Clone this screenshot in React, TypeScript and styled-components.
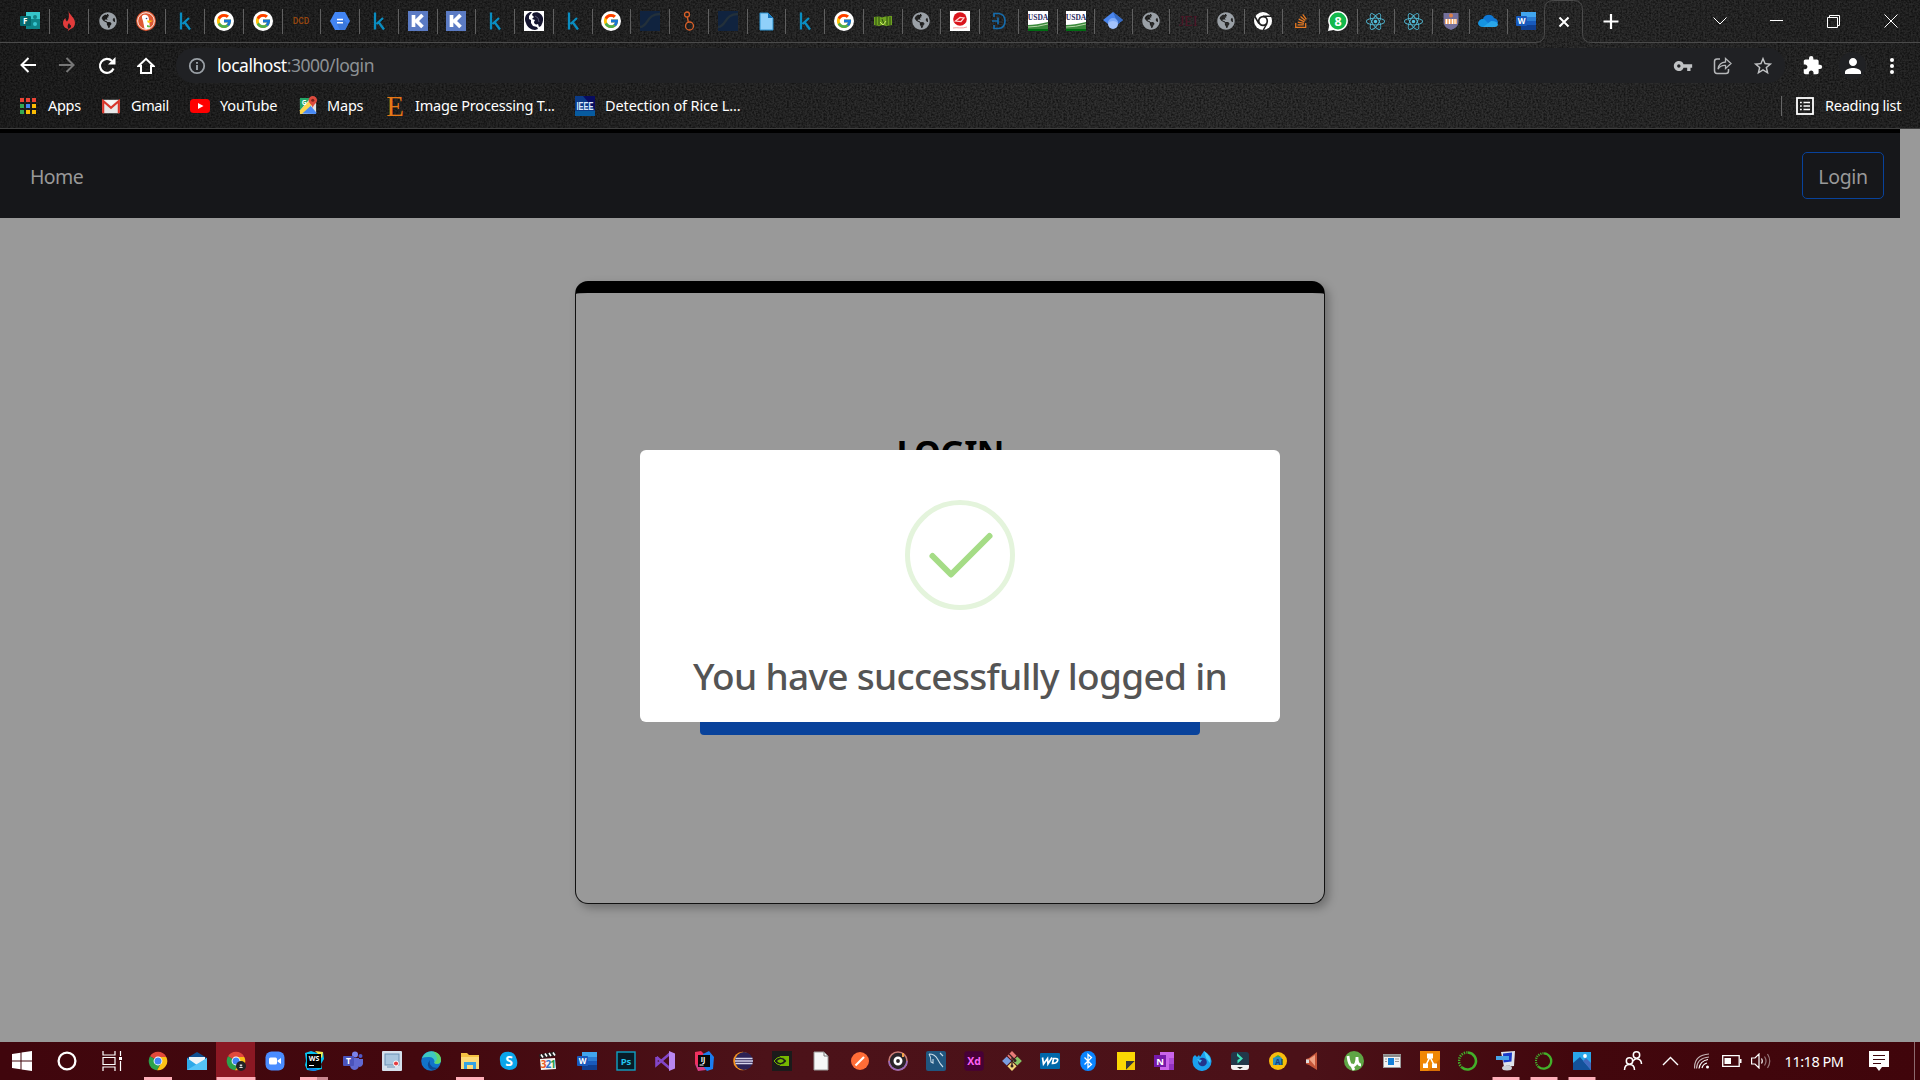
import React from "react";
import styled, { createGlobalStyle, css } from "styled-components";
import { FcGoogle } from "react-icons/fc";
import { FaGlobeAmericas, FaReact, FaStackOverflow } from "react-icons/fa";
import { MdVpnKey, MdExtension, MdPerson, MdStarBorder } from "react-icons/md";

const Global = createGlobalStyle`
  * { box-sizing: border-box; }
  body { margin: 0; background: #999; overflow: hidden; font-family: "Noto Sans", "Open Sans", sans-serif; }
  svg { display: block; }
`;

const Screen = styled.div`
  width: 1920px;
  height: 1080px;
  display: flex;
  flex-direction: column;
`;

/* ---------- browser chrome ---------- */
const weave = `url("data:image/svg+xml,%3Csvg xmlns='http://www.w3.org/2000/svg' width='240' height='129'%3E%3Cfilter id='n'%3E%3CfeTurbulence type='fractalNoise' baseFrequency='.55' numOctaves='2' stitchTiles='stitch'/%3E%3CfeColorMatrix values='0 0 0 0 0  0 0 0 0 0  0 0 0 0 0  0 0 1.6 0 -.5'/%3E%3C/filter%3E%3Crect width='240' height='129' filter='url(%23n)' opacity='.75'/%3E%3C/svg%3E")`;
const Chrome = styled.header`
  height: 129px;
  flex: none;
  border-bottom: 1px solid #3f3f3f;
  background:
    ${weave},
    linear-gradient(90deg, #222222 0%, #2a2a2a 35%, #323232 62%, #303030 80%, #282828 100%);
`;
const TabStrip = styled.div`
  height: 43px;
  display: flex;
`;
const Tab = styled.div<{ $w: number }>`
  width: ${(p) => p.$w}px;
  flex: none;
  display: flex;
  align-items: center;
  justify-content: center;
  border-bottom: 1px solid #4b4b4b;
  position: relative;
  padding-right: 1px;
`;
const LastTab = styled(Tab)`
  justify-content: flex-end;
  padding-right: 0;
`;
const TabLead = styled.div`
  width: 11.25px;
  border-bottom: 1px solid #4b4b4b;
`;
const TabDivider = styled.i`
  position: absolute;
  right: 0;
  top: 9px;
  width: 1px;
  height: 25px;
  background: #606060;
`;
const CurrentTab = styled.div`
  width: 38px;
  flex: none;
  position: relative;
  display: flex;
  align-items: center;
  justify-content: center;
`;
const TabOutline = styled.svg`
  position: absolute;
  left: -10px;
  top: 0;
`;
const TabCorner = styled.div<{ $w: number }>`
  width: ${(p) => p.$w}px;
  flex: none;
`;
const StripRest = styled.div`
  flex: 1;
  display: flex;
  align-items: center;
  border-bottom: 1px solid #4b4b4b;
`;
const Caption = styled.div`
  margin-left: auto;
  height: 38px;
  display: flex;
  align-items: center;
`;
const CaptionButton = styled.span<{ $w: number }>`
  width: ${(p) => p.$w}px;
  display: flex;
  justify-content: center;
`;
const Toolbar = styled.div`
  height: 45px;
  display: flex;
  align-items: center;
  padding: 0 0 0 17px;
`;
const ToolButton = styled.span<{ $w?: number }>`
  width: ${(p) => p.$w ?? 40}px;
  display: flex;
  justify-content: center;
  color: #fff;
`;
const NavButtons = styled.div`
  display: flex;
  width: 158px;
  margin-left: -9px;
`;
const AddressBar = styled.div`
  width: 1609px;
  height: 35px;
  border-radius: 18px;
  background: #202124;
  display: flex;
  align-items: center;
  padding: 0 2px 0 12px;
  margin-left: 10px;
`;
const Url = styled.span`
  margin-left: 11px;
  font-size: 17.5px;
  line-height: 35px;
  letter-spacing: -0.47px;
  color: #8d9195;
  b { color: #fff; font-weight: 400; }
`;
const AddressTools = styled.div`
  margin-left: auto;
  display: flex;
  align-items: center;
`;
const Avatar = styled.span`
  width: 27px;
  height: 27px;
  border-radius: 50%;
  background: #202124;
  display: flex;
  align-items: center;
  justify-content: center;
`;
const Bookmarks = styled.div`
  height: 35px;
  display: flex;
  align-items: center;
  padding: 0 16px 0 18px;
`;
const Bookmark = styled.div<{ $w: number; $gap: number; $ls?: number }>`
  width: ${(p) => p.$w}px;
  flex: none;
  display: flex;
  align-items: center;
  gap: ${(p) => p.$gap}px;
  color: #fff;
  font-size: 14.5px;
  line-height: 20px;
  white-space: nowrap;
  letter-spacing: ${(p) => p.$ls ?? -0.4}px;
`;
const BookmarkLabel = styled.span`
  padding-bottom: 2px;
`;
const ReadingList = styled.div`
  margin-left: auto;
  display: flex;
  align-items: center;
  width: 123px;
  height: 20px;
  border-left: 1px solid #666;
  padding-left: 14px;
  gap: 11px;
  color: #fff;
  font-size: 14.5px;
  line-height: 20px;
  white-space: nowrap;
  letter-spacing: -0.26px;
`;

/* ---------- page ---------- */
const Viewport = styled.main`
  flex: 1;
  min-height: 0;
  background: #999;
  position: relative;
`;
const NavBar = styled.nav`
  width: 1900px;
  height: 89px;
  background: #16171a;
  border-top: 4px solid #000;
  display: flex;
  align-items: center;
  justify-content: space-between;
  padding: 0 16px 0 30px;
  color: #999;
  font-size: 19.5px;
`;
const HomeLink = styled.a`
  letter-spacing: -0.6px;
  line-height: 28px;
  padding-top: 2px;
`;
const LoginButton = styled.button`
  width: 82px;
  height: 47px;
  margin-top: -1px;
  padding: 3px 0 0;
  background: transparent;
  border: 1px solid #08429b;
  border-radius: 5px;
  color: #999;
  font: inherit;
  letter-spacing: -0.35px;
`;
const LoginCard = styled.section`
  width: 750px;
  height: 623px;
  margin: 63px 0 0 575px;
  border: 1px solid #111;
  border-top: 12px solid #000;
  border-radius: 13px;
  box-shadow: 4px 4px 10px rgba(0, 0, 0, 0.28);
  display: flex;
  flex-direction: column;
  align-items: center;
`;
const LoginHeading = styled.h1`
  margin: 135px 0 0;
  font-size: 34px;
  line-height: 48px;
  font-weight: 700;
  letter-spacing: -0.7px;
  color: #000;
`;
const Submit = styled.div`
  width: 500px;
  height: 48px;
  margin-top: 211px;
  border-radius: 4px;
  background: #08429b;
`;
const Backdrop = styled.div`
  position: absolute;
  inset: 0;
  display: flex;
  justify-content: center;
  align-items: flex-start;
  padding-top: 321px;
`;
const Dialog = styled.div`
  width: 640px;
  height: 272px;
  border-radius: 6px;
  background: #fff;
  display: flex;
  flex-direction: column;
  align-items: center;
  padding-top: 50px;
`;
const DialogTitle = styled.h2`
  margin: 39px 0 0;
  font-size: 37px;
  line-height: 54px;
  font-weight: 500;
  letter-spacing: -0.7px;
  color: #545454;
  white-space: nowrap;
`;

/* ---------- taskbar ---------- */
const Taskbar = styled.footer`
  height: 38px;
  flex: none;
  display: flex;
  background: linear-gradient(90deg, #40060d 0%, #43080e 22%, #4c1219 40%, #4b1118 68%, #42070d 82%, #40050b 100%);
`;
const Slot = styled.div<{ $w: number; $active?: boolean }>`
  width: ${(p) => p.$w}px;
  flex: none;
  display: flex;
  align-items: center;
  justify-content: center;
  position: relative;
  ${(p) => p.$active && css`background: #8b1823;`}
`;
const Running = styled.i<{ $w: string; $split?: boolean }>`
  position: absolute;
  bottom: 0;
  left: 50%;
  transform: translateX(-50%);
  height: 3px;
  width: ${(p) => p.$w};
  background: ${(p) => (p.$split ? "linear-gradient(90deg, #ffb0ba 0 17px, #c98890 17px)" : "#ffb0ba")};
`;
const Clock = styled.div`
  width: 76px;
  text-align: center;
  color: #fff;
  font-size: 14.5px;
  line-height: 38px;
  letter-spacing: -0.5px;
  white-space: nowrap;
`;
const ShowDesktop = styled.div`
  width: 6px;
  margin-left: auto;
  border-left: 1px solid #8d6a6e;
`;

/* ---------- icons ---------- */
const Pic = ({ s = 20, children, vb = "0 0 20 20" }: { s?: number; vb?: string; children: React.ReactNode }) => (
  <svg width={s} height={s} viewBox={vb} fill="none">{children}</svg>
);
const Glyph = ({ x = 10, y, size, fill, weight = 700, family = "Open Sans", children }: any) => (
  <text x={x} y={y} fontSize={size} fill={fill} fontWeight={weight} fontFamily={`"${family}", sans-serif`} letterSpacing="0" textAnchor="middle">{children}</text>
);

const Forms = () => (
  <Pic><path d="M6 1h14v9H6z" fill="#36c5c9" /><path d="M6 8h14v10H6z" fill="#0f8387" /><circle cx="15" cy="6" r="2" fill="#157f83" /><circle cx="15" cy="13" r="2" fill="#37c6d0" /><rect x="0" y="5" width="11" height="10" rx="1" fill="#056a6e" /><Glyph x={5.3} y={13} size={8} fill="#fff">F</Glyph></Pic>
);
const Flame = () => (
  <Pic><path d="M9.5 0c1 4 6.5 6.500 6.500 12 0 3-2 5.500-4.500 6L9 20l.5-2C6 17.500 4 15 4 12c0-2 1-4 2.500-5 0 2 .5 3 1.500 3.500C10.500 8 10 4 9.500 0z" fill="#e23b3b" /><path d="M9.500 18q-2-3 .5-6 1 2 2 2.500.5 2-2.500 3.500z" fill="#1f1f1f" /></Pic>
);
const Globe = () => <FaGlobeAmericas size={18} color="#9aa0a6" />;
const Duck = () => (
  <Pic><circle cx="10" cy="10" r="9.900" fill="#de5833" /><circle cx="10" cy="10" r="8.300" fill="none" stroke="#fff" strokeWidth=".9" /><path d="M6 5c2-2 6-1.500 6.800 2L14 17c-1.500 1.200-4 1.200-5.500.5L7 10Q5.500 7 6 5z" fill="#fff" /><path d="M11 9.500l6 .3-5 2.200z" fill="#fdd20a" /><path d="M11 14l3.500 1-1 1.500-2.500-.5z" fill="#65bc46" /><circle cx="10.500" cy="7.500" r=".8" fill="#2d4f8e" /></Pic>
);
const Kaggle = () => (
  <Pic><path d="M6 1.500v17M14 7L7.500 13m2-2l5.500 7.500" stroke="#0a8dc1" strokeWidth="2.300" /></Pic>
);
const Google = () => (
  <Pic><circle cx="10" cy="10" r="10" fill="#fff" /><FcGoogle x={1.500} y={1.500} size={17} /></Pic>
);
const Dcd = () => <Pic><Glyph y={13} size={8.500} fill="#96460f" weight={600} family="Roboto">DCD</Glyph></Pic>;
const Hex = () => (
  <Pic><path d="M5 1h10l5 9-5 9H5l-5-9z" fill="#4285f4" /><path d="M13 8l5 5-3 6h-5l-3-6z" fill="#3b78dc" /><path d="M7 8.500h6M7 11.700h6" stroke="#fff" strokeWidth="1.600" /></Pic>
);
const KBox = () => <Pic><rect width="20" height="20" fill="#5b7bc4" /><path d="M5.500 4v12M14.500 4l-6 6 6 6" stroke="#fff" strokeWidth="3.700" /></Pic>;
const Face = () => (
  <Pic><rect width="20" height="20" fill="#fff" /><path d="M6 1C1 3 0 8 2 12c1 4 5 7 9 7l3-1-1-2-4-1-2-3 0-3-2-1 0-3 3-4z" fill="#15152f" /><path d="M9 2c5-2 9 1 10 5 .5 3-1 6-2 8l-2 1-1-3c-2 1-4 0-4-2l1-2-3-1 2-2-2-2z" fill="#15152f" /><path d="M11 5l3 2 1 4" stroke="#55556e" /></Pic>
);
const Navy = () => <Pic><rect width="20" height="20" fill="#10233f" /><path d="M0 16c9-1 6-13 20-13" stroke="#23303a" strokeWidth="2.400" /></Pic>;
const Nodes = () => (
  <Pic><g stroke="#d75f28" strokeWidth="1.300"><circle cx="8" cy="3.500" r="2.500" /><circle cx="10.500" cy="15" r="4" /><path d="M8.300 6l1 5" /></g></Pic>
);
const FileBlue = () => (
  <Pic><path d="M4 2h8l5 5v12H4z" fill="#8fd0fa" stroke="#2d93d1" /><path d="M12 2l5 5h-5z" fill="#1673b8" /></Pic>
);
const Green = () => (
  <Pic><path d="M1 6l5-.5 3 1 3-1 7-.5v9l-6 1-3-1-4 1-5-1z" fill="#6fa321" /><path d="M3 5v9M6 6v8M9 8l2 5M14 5v9M17 6v8" stroke="#2d4b13" strokeWidth="1" /><path d="M7 11l3 3 3-4" stroke="#cbe86a" /></Pic>
);
const RedLogo = () => (
  <Pic><rect width="20" height="20" fill="#fff" /><circle cx="10" cy="8" r="6.800" fill="#d9141c" /><path d="M5.500 10l4.500-3.500 4 .5-3 3.500z" stroke="#ffd6d6" strokeWidth="1.200" /><path d="M3 17c4-1 9 1 14-1" stroke="#f6a0a0" /></Pic>
);
const DLogo = () => <Pic><path d="M5 6V2.500h5q6 1 6 7.500t-6 7.500H5v-3.500M3 10h6M9 6.500v7" stroke="#166bab" strokeWidth="1.700" /></Pic>;
const Usda = () => (
  <Pic><rect width="20" height="20" fill="#fff" /><Glyph y={8.500} size={7.500} fill="#25285b" family="Liberation Serif">USDA</Glyph><path d="M0 14q8 0 20-3v9H0z" fill="#38883a" /><path d="M0 16q9 0 20-3" stroke="#b5d6a7" /><path d="M0 18h20v2H0z" fill="#006b12" /></Pic>
);
const Scholar = () => (
  <Pic><path d="M10 1l10 8-10 8L0 9z" fill="#4a86ee" /><path d="M10 1l10 8-5 4z" fill="#356ac3" /><circle cx="10" cy="13" r="5" fill="#a3c2fb" /><path d="M5 12a5 5 0 0110 0q-5-4-10 0z" fill="#7eaaf8" /></Pic>
);
const Jei = () => <Pic><Glyph y={15} size={14} weight={400} fill="#4d1325" family="Liberation Serif">JEI</Glyph></Pic>;
const ChromeMono = () => (
  <Pic><circle cx="10" cy="10" r="9" fill="#fff" /><circle cx="10" cy="10" r="4.300" fill="#fff" stroke="#202020" strokeWidth="1.700" /><path d="M10 5.300h8.500M5.900 12.500L1.800 5.500M14 12.500L10 19.500" stroke="#202020" strokeWidth="1.500" /></Pic>
);
const WhatsApp = () => (
  <Pic><path d="M10 0a10 10 0 11-4.500 19L0 20l1.200-5.500A10 10 0 0110 0z" fill="#fff" /><circle cx="10" cy="10" r="8.400" fill="#13b84c" /><Glyph y={14.600} size={12.500} fill="#fff">8</Glyph></Pic>
);
const Shield = () => (
  <Pic><path d="M2.500 2h15v10q-1 5-7.500 7-6.500-2-7.500-7z" fill="#74709c" /><path d="M4 8h12v5H4z" fill="#f4b47e" /><path d="M5.500 8v5M8.500 8v5M11.500 8v5M14 8v5" stroke="#fff" /><circle cx="10" cy="4.500" r="2" fill="#e07e44" /></Pic>
);
const OneDrive = () => (
  <Pic><path d="M5 8a6 6 0 0111-1q4 1 4 5H1q0-4 4-4z" fill="#0f78d4" /><path d="M0 12q1-4 6-4l8 8H4q-4-1-4-4z" fill="#1593e0" /><path d="M5 16l8-6q7 0 7 4-1 2-3 2z" fill="#2aa7ea" /></Pic>
);
const Word = () => (
  <Pic><path d="M5 1h15v5H5z" fill="#41a5ee" /><path d="M5 6h15v4H5z" fill="#2b7cd3" /><path d="M5 10h15v4H5z" fill="#185abd" /><path d="M5 14h15v5H5z" fill="#103f91" /><rect y="5" width="11" height="10" rx="1" fill="#185abd" /><Glyph x={5.500} y={13} size={8} fill="#fff">W</Glyph></Pic>
);

const tabs: React.ReactNode[] = [
  <Forms />, <Flame />, <Globe />, <Duck />, <Kaggle />, <Google />, <Google />, <Dcd />, <Hex />, <Kaggle />,
  <KBox />, <KBox />, <Kaggle />, <Face />, <Kaggle />, <Google />, <Navy />, <Nodes />, <Navy />, <FileBlue />,
  <Kaggle />, <Google />, <Green />, <Globe />, <RedLogo />, <DLogo />, <Usda />, <Usda />, <Scholar />, <Globe />,
  <Jei />, <Globe />, <ChromeMono />, <FaStackOverflow size={16} color="#e87a22" />, <WhatsApp />,
  <FaReact size={19} color="#53c1de" />, <FaReact size={19} color="#53c1de" />, <Shield />, <OneDrive />,
];

const AppsGrid = () => {
  const c = ["#ea4335", "#ea4335", "#ea4335", "#34a853", "#4285f4", "#fbbc04", "#34a853", "#fbbc04", "#fbbc04"];
  return <Pic s={20}>{c.map((f, i) => <rect key={i} x={2 + (i % 3) * 6} y={2 + Math.floor(i / 3) * 6} width="4" height="4" fill={f} />)}</Pic>;
};
const Gmail = () => (
  <Pic s={18}><rect x="0" y="3" width="20" height="15" rx="1.500" fill="#e8e8e8" /><path d="M1.300 18V4.500L10 12l8.700-7.500V18" stroke="#d9362b" strokeWidth="2.400" /><path d="M3 3.500h14L10 9.500z" fill="#f6f6f6" /></Pic>
);
const YouTube = () => <Pic><rect y="3" width="20" height="14" rx="3.500" fill="#f00" /><path d="M8 7l5.500 3L8 13z" fill="#fff" /></Pic>;
const MapsIcon = () => (
  <Pic s={19}><rect x="1" y="2" width="17" height="17" rx="1.500" fill="#dfe3e6" /><path d="M2 18.500L11 9l7 8v2z" fill="#4889f4" /><path d="M1 15L12 4l3 4L3 19H1z" fill="#fdd54c" /><path d="M1 15V2h11z" fill="#23a566" /><path d="M14.500 0a4.500 4.500 0 014.500 4.500c0 3-3.500 4-4.500 8-1-4-4.500-5-4.500-8A4.500 4.500 0 0114.500 0z" fill="#dc4b3e" /><circle cx="14.500" cy="4.500" r="1.600" fill="#7c231b" /><Glyph x={5.500} y={9} size={7} fill="#fff">G</Glyph></Pic>
);
const Elsevier = () => (
  <svg width="20" height="20" viewBox="0 0 20 20" overflow="visible"><Glyph y={19.500} size={29} weight={400} fill="#e67816" family="Liberation Serif">E</Glyph></svg>
);
const Ieee = () => (
  <svg width="20" height="20" viewBox="0 0 20 20" overflow="visible"><rect width="20" height="20" fill="#0a3a86" /><path d="M8 0h12v14z" fill="#080c60" /><path d="M0 15h20v5H0z" fill="#075ba0" /><text x="1.500" y="13.500" fontSize="10" fontWeight="700" fill="#dceaff" fontFamily='"Liberation Sans", sans-serif' letterSpacing="0" textLength="17" lengthAdjust="spacingAndGlyphs">IEEE</text></svg>
);

const ChromeColor = ({ badge = false }) => (
  <Pic><path d="M10 10L2 5.300A9.200 9.200 0 0118 5.300V6H10z" fill="#e0493b" /><path d="M10 10L2 5.300A9.200 9.200 0 009 19.200l4-7z" fill="#2ba24c" /><path d="M10 6h8.300A9.200 9.200 0 019 19.200l4-7z" fill="#fbc116" /><circle cx="10" cy="10" r="4.400" fill="#fff" /><circle cx="10" cy="10" r="3.500" fill="#4285f4" />{badge && <><circle cx="15" cy="15" r="5" fill="#222326" /><path d="M12.800 17q2.200-3 4.400 0zM13.800 13.500h2.400v1.500h-2.400z" fill="#ddd" /></>}</Pic>
);
const Windows = () => <Pic><path d="M0 3l8.500-1.200v7.700H0zM9.500 1.600L20 0v9.500H9.500zM0 10.500h8.500v7.700L0 17zM9.500 10.500H20V20L9.500 18.500z" fill="#fff" /></Pic>;
const Cortana = () => <Pic><circle cx="10" cy="10" r="8.400" stroke="#fff" strokeWidth="2.300" /></Pic>;
const TaskView = () => (
  <Pic><g stroke="#fff" strokeWidth="1.200"><path d="M1 0v4h12V0M1 20v-4h12v4M1 6.500h12v7H1zM18.500 0v5M18.500 10v10" /></g><rect x="17" y="6" width="3" height="3" fill="#fff" /></Pic>
);
const Mail = () => <Pic><path d="M0 7l10-6 10 6v3H0z" fill="#0f4f91" /><path d="M2 6h16v8H2z" fill="#f0f4f8" /><path d="M0 7l10 7 10-7v12H0z" fill="#2ea9e8" /><path d="M0 19L20 7v12z" fill="#55c4f8" /></Pic>;
const Zoom = () => <Pic><rect x=".5" y=".5" width="19" height="19" rx="6" fill="#4a8cff" /><rect x="4" y="6.500" width="8" height="7" rx="1.500" fill="#fff" /><path d="M12.500 9.500L16 7v6l-3.500-2.500z" fill="#fff" /></Pic>;
const WebStorm = () => <Pic><path d="M1 2l6-2 6 2 6-1 1 7-3 5 1 5-8 2-7-1-2-5 1-4z" fill="#07c3f2" /><path d="M11 0l8 1-1 6z" fill="#f6e94e" /><path d="M4 17l10 1-3 2-6-1z" fill="#1179ec" /><rect x="3" y="3" width="14" height="14" fill="#000" /><Glyph y={10} size={7} fill="#fff">WS</Glyph><path d="M5 14.500h5" stroke="#fff" /></Pic>;
const Teams = () => <Pic><circle cx="12" cy="3.500" r="3" fill="#7b83eb" /><circle cx="17.500" cy="5" r="2" fill="#5059c9" /><path d="M8 7h8v8q-1 4-5 4-4-1-4-5zM16 8h4v5q-1 3-4 3z" fill="#6069d2" /><rect y="5" width="11" height="10" rx="1" fill="#4b53bc" /><Glyph x={5.500} y={13.200} size={8.500} fill="#fff">T</Glyph></Pic>;
const Recorder = () => <Pic><rect width="20" height="20" rx="1" fill="#d5e0ec" /><rect x="3" y="3" width="14" height="11" fill="#a9c6df" stroke="#6a90b5" /><path d="M5 16h8" stroke="#6a90b5" /><circle cx="14" cy="12.500" r="2.500" fill="#e43b3f" stroke="#fff" /></Pic>;
const Edge = () => <Pic><circle cx="10" cy="10" r="9.800" fill="#1173c9" /><path d="M1 7Q4 0 11 .2q8 1 9 8.800 0 4-4 4-4-.5-2.500-2.500Q13 6 8 6 3 6 1 7z" fill="#3fc8c0" /><path d="M12 .3q8 1.500 8 9-.5 4-5 3.500L13.500 12Q19 7 12 .3z" fill="#60d66a" /><path d="M9 9q-5 6 1 9.500 4 1 7-2-5 1-7-2-2-2-1-5.500z" fill="#0c4a94" /></Pic>;
const Explorer = () => <Pic><path d="M1 2h6l2 2h10v14H1z" fill="#f5c243" /><path d="M1 6h18v12H1z" fill="#fddb79" /><path d="M4 18v-7h12v7h-3v-4H7v4z" fill="#35a3e3" /></Pic>;
const Skype = () => <Pic><path d="M6 1q10-2 12 8 2 10-8 10-9-1-9-9-1-7 5-9z" fill="#0aa5ea" /><Glyph y={14.800} size={14} fill="#fff">S</Glyph></Pic>;
const Clapper = () => <Pic><path d="M1 3.500l16-3 1 4-16 3z" fill="#222" /><path d="M3 3.500l2 3M7 2.500l2 3M11 2l2 3M15 1.500l2 3" stroke="#fff" strokeWidth="1.600" /><path d="M2 8l15-1 1 11-15 1z" fill="#f3f3ef" /><Glyph x={5.500} y={17} size={10} fill="#e85a20">3</Glyph><Glyph x={10.300} y={17} size={10} fill="#2872ca">2</Glyph><Glyph x={15} y={17} size={10} fill="#269a46">1</Glyph></Pic>;
const Tile = ({ bg, border, fg, t, size = 9.500 }: any) => <Pic><rect x="1" y="1" width="18" height="18" rx={border ? 0 : 2} fill={bg} stroke={border || bg} strokeWidth="1.400" /><Glyph y={13.500} size={size} fill={fg}>{t}</Glyph></Pic>;
const VisualStudio = () => <Pic><path d="M1.500 6v8L15 2.500M1.500 6L15 17.500" fill="none" stroke="#8346c8" strokeWidth="2.600" /><path d="M14 0l6 2.500v15L14 20z" fill="#b987f0" /></Pic>;
const IntelliJ = () => <Pic><path d="M1 1l6-1 5 5-8 10-3-2z" fill="#f0315f" /><path d="M9 3l6-3 5 6-1 12-6 2-5-5z" fill="#1a7df0" /><path d="M1 13l8 2 3 4-8 1z" fill="#d53e86" /><rect x="4" y="4" width="12" height="12" fill="#060606" /><Glyph x={9} y={11} size={7} fill="#fff">IJ</Glyph><path d="M5.500 14h4" stroke="#fff" /></Pic>;
const Eclipse = () => <Pic><circle cx="9.500" cy="10" r="9.300" fill="#f7941e" /><circle cx="11" cy="10" r="9" fill="#2c2255" /><path d="M2.500 7.500h17M2 10h18M2.500 12.500h17" stroke="#d7d5ec" strokeWidth="1.300" /></Pic>;
const Nvidia = () => <Pic><rect width="20" height="20" fill="#1b1b1b" /><path d="M8 5h9v10H8z" fill="#76b900" /><path d="M2 10q6-8 13 0-7 8-13 0z" fill="#1b1b1b" stroke="#76b900" /><path d="M5 10q4-4 7 0-4 4-7 0z" fill="#76b900" /></Pic>;
const Blank = () => <Pic><path d="M3 1h10l4 4v14H3z" fill="#f5f7f7" stroke="#9a9a9a" /><path d="M13 1v4h4" stroke="#777" /></Pic>;
const Postman = () => <Pic><circle cx="10" cy="10" r="9" fill="#ff6c37" /><path d="M5.500 14.500L14 6" stroke="#fff" strokeWidth="2.200" /></Pic>;
const Groove = () => <Pic><circle cx="10" cy="10" r="9" fill="#292429" stroke="#c77b75" strokeWidth="1.600" /><path d="M1 10a9 9 0 0018 0" stroke="#9868bb" strokeWidth="1.600" /><circle cx="10" cy="10" r="3.200" stroke="#fff" strokeWidth="2.600" /><path d="M15 2v4" stroke="#f2a24b" strokeWidth="2" /></Pic>;
const MySql = () => <Pic><rect width="20" height="20" rx="2" fill="#20567f" /><path d="M3 3q6 0 8.500 5t5.500 8M3 3q2 3 2 8l2 1 0-4M14 2l3 3" stroke="#c9dbe8" strokeWidth="1.100" /></Pic>;
const Git = () => <Pic><g transform="rotate(45 10 10)"><rect x="3" y="3" width="6.500" height="6.500" fill="#e87b77" /><rect x="10.500" y="3" width="6.500" height="6.500" fill="#86c465" /><rect x="3" y="10.500" width="6.500" height="6.500" fill="#7a9ee0" /><rect x="10.500" y="10.500" width="6.500" height="6.500" fill="#f3d67a" /></g><path d="M7 3l6 6M10 6v9" stroke="#342022" strokeWidth="1.300" /><circle cx="10" cy="15" r="1.500" fill="#342022" /><circle cx="13" cy="9.500" r="1.500" fill="#342022" /></Pic>;
const Wd = () => <Pic><rect y="2" width="20" height="16" rx="1" fill="#0068a9" /><path d="M2.500 6.500l1 6.500 4-5.500.5 5.500 4-6.500M13.500 7.500h2q3 0 2 2.500t-5 2.500z" stroke="#fff" strokeWidth="1.700" /></Pic>;
const Bluetooth = () => <Pic><rect x="2.300" y="0" width="15.500" height="20" rx="7.500" fill="#0a84ff" /><path d="M6.500 6.500l7 7L10 16.500v-13l3.500 3-7 7" stroke="#fff" strokeWidth="1.300" /></Pic>;
const Sticky = () => <Pic><path d="M1 1h18v18H1z" fill="#fcd703" /><path d="M10 10h9l-9 9z" fill="#38383b" /><path d="M19 10v9h-9z" fill="#f2c500" /></Pic>;
const OneNote = () => <Pic><path d="M6 1h14v18H6z" fill="#ca64ea" /><path d="M15 7h5v6h-5z" fill="#ae4bd5" /><path d="M15 13h5v6h-5z" fill="#9332bf" /><rect y="4" width="12" height="12" fill="#7719aa" /><Glyph x={6} y={13.500} size={9.500} fill="#fff">N</Glyph></Pic>;
const Firefox = () => <Pic><path d="M1 6l2-2 2 2 2-2 1 2 4-6q7 4 7.500 10A9.500 9.500 0 01.5 11Q.5 8 1 6z" fill="#1aa0ee" /><path d="M12 0q8 6 6 12l-4-5z" fill="#4bd0f8" /><circle cx="10.500" cy="11" r="4.300" fill="#22338b" /><path d="M5 8l5 1-2 3z" fill="#3cc2f8" /></Pic>;
const Filmora = () => <Pic><rect x="1" y="1" width="18" height="14" rx="3" fill="#22384a" /><path d="M7 2l6 5.500-5.500 5V9L10 7.500 7 5z" fill="#3ee2b8" /><path d="M1 14h18v2q0 3-3 3H4q-3 0-3-3z" fill="#f3f3f3" /><path d="M7 16h6l-3 2z" fill="#222" /></Pic>;
const AiBadge = () => <Pic><circle cx="10" cy="10" r="9" fill="#f8bd0d" /><path d="M5 7l5-2 4 2v7H5z" fill="#2a8fc0" /><path d="M7 6l3-2 3 2z" fill="#33a852" /><Glyph x={11} y={14} size={8} fill="#173f85">AI</Glyph></Pic>;
const Speaker = () => (
  <svg width="20" height="20" viewBox="0 0 20 20"><path d="M0 8l3-1 8-6v18l-8-5-3-1z" fill="#c5553a" /><path d="M3 8l6-4v11z" fill="#f0a083" /><path d="M0 8.500h3v3.500H0z" fill="#ddd" /></svg>
);
const UTorrent = () => <Pic><circle cx="10" cy="10" r="10" fill="#5fa545" /><path d="M4 5q1 9 4 10 5 0 5-9 0 8 4 8M7 13l3 6" stroke="#fff" strokeWidth="2.800" /></Pic>;
const WinApp = () => <Pic><rect x="1.500" y="3.500" width="17" height="13" fill="#f3f3f3" stroke="#9a9a9a" /><path d="M1 5h18" stroke="#888" strokeWidth="2" /><rect x="6" y="7" width="6" height="7" fill="#1380d8" /><path d="M3 8h2M3 10.500h2M13 8h4M13 10.500h4" stroke="#999" /></Pic>;
const DrawIo = () => <Pic><rect width="20" height="20" fill="#f08705" /><path d="M20 8v12H8z" fill="#d96f04" /><path d="M10 6l-4 8M10 6l4 8" stroke="#fff" strokeWidth="1.600" /><path d="M7 2.500h6v5H7zM3 12.500h5v4.500H3zM12 12.500h5v4.500h-5z" fill="#fff" /></Pic>;
const Ring = ({ s = 20 }) => <Pic s={s}><path d="M10 1.500a8.500 8.500 0 11-6 15" stroke="#43b02a" strokeWidth="2.600" /><path d="M4 16.500A8.500 8.500 0 0110 1.500" stroke="#43b02a" strokeWidth="2.600" strokeDasharray="1.300 1.100" /></Pic>;
const OldPc = () => <Pic><path d="M5 1l14-1-1 15-10 1z" fill="#dfe3ea" /><path d="M7 2.500l9-1-.5 9-8 1z" fill="#1939c8" /><path d="M0 5h13v4H0z" fill="#48a4e8" /><path d="M10 14h4v3h-4z" fill="#b5b9c2" /><ellipse cx="11" cy="17" rx="5" ry="2.500" fill="#cdd0d6" /></Pic>;
const Photos = () => <Pic><path d="M1 1h18v18H1z" fill="#2aa6ea" /><path d="M1 12l7-6 11 13H1z" fill="#14529b" /><path d="M11 10l3-3 5 5v7z" fill="#4169bd" /><circle cx="13" cy="5" r="1.900" fill="#fff" /></Pic>;

type TaskbarApp = { i: React.ReactNode; run?: string; active?: boolean; split?: boolean };
const apps: TaskbarApp[] = [
  { i: <ChromeColor />, run: "28px" }, { i: <Mail /> }, { i: <ChromeColor badge />, run: "100%", active: true }, { i: <Zoom /> },
  { i: <WebStorm />, run: "28px", split: true }, { i: <Teams /> }, { i: <Recorder /> }, { i: <Edge /> }, { i: <Explorer />, run: "28px" },
  { i: <Skype /> }, { i: <Clapper /> }, { i: <Word /> }, { i: <Tile bg="#071c28" border="#0fa1c4" fg="#22c4ee" t="Ps" /> },
  { i: <VisualStudio /> }, { i: <IntelliJ /> }, { i: <Eclipse /> }, { i: <Nvidia /> }, { i: <Blank /> }, { i: <Postman /> },
  { i: <Groove /> }, { i: <MySql /> }, { i: <Tile bg="#470137" fg="#ff61f6" t="Xd" size={10.500} /> }, { i: <Git /> }, { i: <Wd /> },
  { i: <Bluetooth /> }, { i: <Sticky /> }, { i: <OneNote /> }, { i: <Firefox /> }, { i: <Filmora /> }, { i: <AiBadge /> },
  { i: <Speaker /> }, { i: <UTorrent /> }, { i: <WinApp /> }, { i: <DrawIo /> }, { i: <Ring /> }, { i: <OldPc />, run: "27px" },
  { i: <Ring s={18} />, run: "27px" }, { i: <Photos />, run: "27px" },
];

export default function App() {
  return (
    <Screen>
      <Global />
      <Chrome>
        <TabStrip>
          <TabLead />
          {tabs.map((icon, n) => (
            <Tab key={n} $w={n < 27 ? 38.75 : 37.5}>
              {icon}
              <TabDivider />
            </Tab>
          ))}
          <LastTab $w={28}><Word /></LastTab>
          <TabCorner $w={9.250} />
          <CurrentTab>
            <TabOutline width="60" height="43" fill="none">
              <path d="M-3 42.500H0q9.500 0 9.500-9V9.500q0-9 9-9h20q9 0 9 9v24q0 9 9 9H60" stroke="#4b4b4b" />
            </TabOutline>
            <svg width="12" height="12" viewBox="0 0 12 12"><path d="M1.500 1.500l9 9M10.500 1.500l-9 9" stroke="#fff" strokeWidth="2" /></svg>
          </CurrentTab>
          <TabCorner $w={11} />
          <StripRest>
            <svg width="34" height="16" viewBox="0 0 34 16"><path d="M9.500 8.500h15M17 1v15" stroke="#fff" strokeWidth="2.200" /></svg>
            <Caption>
              <CaptionButton $w={57}><svg width="14" height="8"><path d="M.5.5L7 7 13.500.5" stroke="#fff" fill="none" /></svg></CaptionButton>
              <CaptionButton $w={57}><svg width="13" height="2"><path d="M0 .5h13" stroke="#fff" /></svg></CaptionButton>
              <CaptionButton $w={57}><svg width="13" height="13"><path d="M.5 2.500h10v10H.5zM2.500 2.500V.5h10v10h-2" stroke="#fff" fill="none" /></svg></CaptionButton>
              <CaptionButton $w={58}><svg width="14" height="14"><path d="M.5.5l13 13M13.500.5l-13 13" stroke="#fff" /></svg></CaptionButton>
            </Caption>
          </StripRest>
        </TabStrip>
        <Toolbar>
          <NavButtons>
            <ToolButton><svg width="16" height="16" viewBox="0 0 16 16"><path d="M16 8H2M8.500 1L1.500 8l7 7" stroke="#fff" strokeWidth="2" fill="none" /></svg></ToolButton>
            <ToolButton><svg width="16" height="16" viewBox="0 0 16 16"><path d="M0 8h14M7.500 1l7 7-7 7" stroke="#777" strokeWidth="2" fill="none" /></svg></ToolButton>
            <ToolButton><svg width="18" height="18" viewBox="0 0 18 18"><path d="M15.500 11.500A7 7 0 1114 4" stroke="#fff" strokeWidth="2.200" fill="none" /><path d="M17.500 0v7.500H10z" fill="#fff" /></svg></ToolButton>
            <ToolButton><svg width="18" height="18" viewBox="0 0 18 18"><path d="M1.500 9L9 1.800 16.500 9H14v7H4V9z" stroke="#fff" strokeWidth="2" fill="none" /></svg></ToolButton>
          </NavButtons>
          <AddressBar>
            <svg width="18" height="18" viewBox="0 0 18 18"><circle cx="9" cy="9" r="7.200" stroke="#9aa0a6" strokeWidth="1.800" fill="none" /><path d="M9 8v5M9 5v1.800" stroke="#9aa0a6" strokeWidth="1.900" /></svg>
            <Url><b>localhost</b>:3000/login</Url>
            <AddressTools>
              <ToolButton $w={40}><MdVpnKey size={20} color="#c0c2c4" /></ToolButton>
              <ToolButton $w={40}><svg width="20" height="18" viewBox="0 0 20 18"><path d="M7 2H4Q1.500 2 1.500 4.500v9Q1.500 16.500 4 16.500h9q2.500 0 2.500-2.500v-2" stroke="#b5b7b9" strokeWidth="1.500" fill="none" /><path d="M5 12q1-6.500 7.500-7V1.500L18 6.500l-5.500 5V8.500Q8 8 5 12z" stroke="#b5b7b9" strokeWidth="1.300" fill="none" /></svg></ToolButton>
              <ToolButton $w={40}><MdStarBorder size={22} color="#c0c2c4" /></ToolButton>
            </AddressTools>
          </AddressBar>
          <ToolButton $w={54}><MdExtension size={21} /></ToolButton>
          <ToolButton $w={27}><Avatar><MdPerson size={24} /></Avatar></ToolButton>
          <ToolButton $w={52}><svg width="6" height="18"><circle cx="3" cy="3" r="2" fill="#fff" /><circle cx="3" cy="9" r="2" fill="#fff" /><circle cx="3" cy="15" r="2" fill="#fff" /></svg></ToolButton>
        </Toolbar>
        <Bookmarks>
          <Bookmark $w={84} $gap={10} $ls={-0.3}><AppsGrid /><BookmarkLabel>Apps</BookmarkLabel></Bookmark>
          <Bookmark $w={88} $gap={11}><Gmail /><BookmarkLabel>Gmail</BookmarkLabel></Bookmark>
          <Bookmark $w={109} $gap={10} $ls={-0.18}><YouTube /><BookmarkLabel>YouTube</BookmarkLabel></Bookmark>
          <Bookmark $w={86} $gap={9} $ls={-0.2}><MapsIcon /><BookmarkLabel>Maps</BookmarkLabel></Bookmark>
          <Bookmark $w={190} $gap={10} $ls={-0.2}><Elsevier /><BookmarkLabel>Image Processing T...</BookmarkLabel></Bookmark>
          <Bookmark $w={190} $gap={10} $ls={-0.12}><Ieee /><BookmarkLabel>Detection of Rice L...</BookmarkLabel></Bookmark>
          <ReadingList>
            <svg width="18" height="18" viewBox="0 0 18 18"><rect x="1" y="1" width="16" height="16" stroke="#fff" strokeWidth="1.800" fill="none" /><path d="M4 5.500h1.800M4 9h1.800M4 12.500h1.800M7.500 5.500H14M7.500 9H14M7.500 12.500H14" stroke="#fff" strokeWidth="1.500" /></svg>
            <BookmarkLabel>Reading list</BookmarkLabel>
          </ReadingList>
        </Bookmarks>
      </Chrome>

      <Viewport>
        <NavBar>
          <HomeLink>Home</HomeLink>
          <LoginButton>Login</LoginButton>
        </NavBar>
        <LoginCard>
          <LoginHeading>LOGIN</LoginHeading>
          <Submit />
        </LoginCard>
        <Backdrop>
          <Dialog>
            <svg width="110" height="110" fill="none">
              <circle cx="55" cy="55" r="52.500" stroke="#e4f4dc" strokeWidth="5" />
              <path d="M27.500 56L46 74.500 84.500 36" stroke="#a5dc86" strokeWidth="6" strokeLinecap="round" strokeLinejoin="round" />
            </svg>
            <DialogTitle>You have successfully logged in</DialogTitle>
          </Dialog>
        </Backdrop>
      </Viewport>

      <Taskbar>
        <Slot $w={44}><Windows /></Slot>
        <Slot $w={46}><Cortana /></Slot>
        <Slot $w={44}><TaskView /></Slot>
        <Slot $w={4} />
        {apps.map((a, n) => (
          <Slot key={n} $w={n < 19 ? 39 : 38} $active={a.active}>
            {a.i}
            {a.run && <Running $w={a.run} $split={a.split} />}
          </Slot>
        ))}
        <Slot $w={12} />
        <Slot $w={39}><svg width="20" height="20" viewBox="0 0 20 20" fill="none" stroke="#fff" strokeWidth="1.500"><circle cx="13.500" cy="4" r="3.200" /><circle cx="6.500" cy="10" r="3.200" /><path d="M1.500 19q0-5.500 5-5.500t5 5.500M10 10q2-3 5-2 3.500 1 3.500 5" /></svg></Slot>
        <Slot $w={37}><svg width="17" height="10"><path d="M1 9l7.500-7.500L16 9" stroke="#fff" strokeWidth="1.400" fill="none" /></svg></Slot>
        <Slot $w={26}><svg width="16" height="16" fill="none"><g stroke="#fff" strokeWidth="1.200"><path d="M8 15q1-4 5-5M5 15.500Q6 8 14 6.500" /><path d="M2.500 15.500Q3 5 15 4M.6 15.500Q0 2 15 1" opacity=".7" /></g><circle cx="13.500" cy="14" r="1.500" fill="#fff" /></svg></Slot>
        <Slot $w={33}><svg width="20" height="12"><path d="M.7.700h16.500v10.600H.7z" stroke="#fff" strokeWidth="1.300" fill="none" /><path d="M2.500 3h6.500v6H2.500zM18 4h1.500v4H18z" fill="#fff" /></svg></Slot>
        <Slot $w={26}><svg width="20" height="16" fill="none" stroke="#fff" strokeWidth="1.200"><path d="M.6 5h3.400l4-4v14l-4-4H.6zM10.500 5.500q1.500 2.500 0 5" /><path d="M13.500 3.500q3 4.500 0 9M16.500 1q4.500 7 0 14" opacity=".45" /></svg></Slot>
        <Slot $w={2} />
        <Clock>11:18 PM</Clock>
        <Slot $w={54}><svg width="20" height="20"><path d="M0 0h20v16h-7l-3 4-3-4H0z" fill="#fff" /><path d="M4 4.500h12M4 8.500h12M4 12.500h8" stroke="#40060d" strokeWidth="1.200" /></svg></Slot>
        <ShowDesktop />
      </Taskbar>
    </Screen>
  );
}
